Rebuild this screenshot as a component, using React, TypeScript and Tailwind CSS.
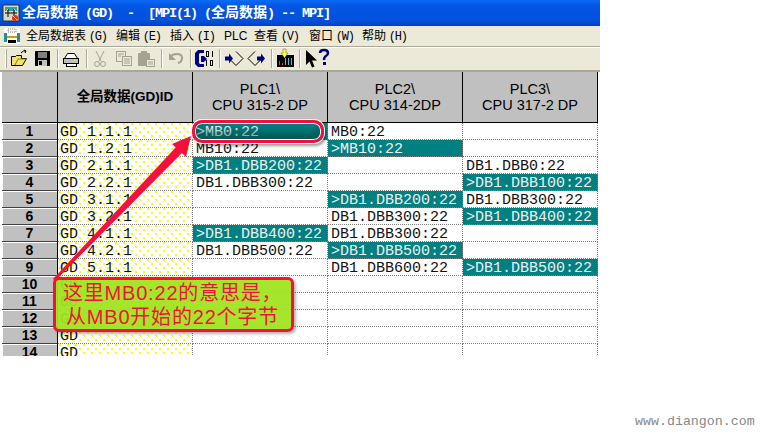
const mono = "font-['Liberation_Mono','Noto_Sans_CJK_SC',monospace]";
const cols = "grid grid-cols-[2px_56px_135px_135px_135px_135px]";

type Cell = { t: string; on?: boolean } | null;
const rows: { id: string; c: Cell[] }[] = [
  { id: "GD 1.1.1", c: [{ t: ">MB0:22", on: true }, { t: "MB0:22" }, null] },
  { id: "GD 1.2.1", c: [{ t: "MB10:22" }, { t: ">MB10:22", on: true }, null] },
  { id: "GD 2.1.1", c: [{ t: ">DB1.DBB200:22", on: true }, null, { t: "DB1.DBB0:22" }] },
  { id: "GD 2.2.1", c: [{ t: "DB1.DBB300:22" }, null, { t: ">DB1.DBB100:22", on: true }] },
  { id: "GD 3.1.1", c: [null, { t: ">DB1.DBB200:22", on: true }, { t: "DB1.DBB300:22" }] },
  { id: "GD 3.2.1", c: [null, { t: "DB1.DBB300:22" }, { t: ">DB1.DBB400:22", on: true }] },
  { id: "GD 4.1.1", c: [{ t: ">DB1.DBB400:22", on: true }, { t: "DB1.DBB300:22" }, null] },
  { id: "GD 4.2.1", c: [{ t: "DB1.DBB500:22" }, { t: ">DB1.DBB500:22", on: true }, null] },
  { id: "GD 5.1.1", c: [null, { t: "DB1.DBB600:22" }, { t: ">DB1.DBB500:22", on: true }] },
  { id: "GD", c: [null, null, null] },
  { id: "GD", c: [null, null, null] },
  { id: "GD", c: [null, null, null] },
  { id: "GD", c: [null, null, null] },
  { id: "GD", c: [null, null, null] },
];

function Sep({ x }: { x: number }) {
  return (
    <>
      <rect x={x} y="2" width="1" height="19" fill="#aca899" />
      <rect x={x + 1} y="2" width="1" height="19" fill="#fff" />
    </>
  );
}

function ToolIcons() {
  return (
    <svg width="340" height="23" viewBox="0 0 340 23" className="block">
      <rect x="5" y="2" width="1" height="19" fill="#fff" />
      <rect x="6" y="2" width="1" height="19" fill="#aca899" />
      {/* open */}
      <path d="M11.5 18.5 V9.5 h4 l1-1 h5 v3 h5 l-4 7z" fill="#f3e26a" stroke="#000" />
      <path d="M15 18 l3-6 h8" stroke="#8a7a20" fill="none" />
      <path d="M21 6 q2-3 5-2 M26 4 l-2-1 M26 4 l-1 2" stroke="#000" fill="none" />
      {/* save */}
      <rect x="35" y="4" width="15" height="15" fill="#000" />
      <rect x="38" y="5" width="9" height="6" fill="#7f7f7f" />
      <rect x="38" y="13" width="9" height="6" fill="#c0c0c0" />
      <rect x="39" y="14" width="3" height="4" fill="#000" />
      <Sep x={57} />
      {/* print */}
      <path d="M67.5 6.5 h7 l3 5 h-13z" fill="#fff" stroke="#000" />
      <rect x="63.5" y="11.5" width="15" height="5" fill="#c0c0c0" stroke="#000" />
      <rect x="66.5" y="16.5" width="10" height="3" fill="#fff" stroke="#000" />
      <rect x="74" y="13" width="2" height="1" fill="#ffe020" />
      <Sep x={86} />
      {/* cut */}
      <g stroke="#a5a294" fill="none">
        <path d="M96 4 l5 10 M104 4 l-5 10" />
        <circle cx="97" cy="17" r="2.5" />
        <circle cx="103" cy="17" r="2.5" />
      </g>
      {/* copy */}
      <g stroke="#a5a294" fill="#ece9d8">
        <rect x="116.5" y="4.5" width="9" height="10" />
        <rect x="122.5" y="9.5" width="9" height="9" />
        <path d="M118 7h6M118 9h3M124 12h6M124 14h6M124 16h6" fill="none" />
      </g>
      {/* paste */}
      <rect x="138" y="6" width="12" height="13" rx="1" fill="#a5a294" />
      <rect x="141" y="4" width="6" height="4" fill="#a5a294" />
      <rect x="146.5" y="12.5" width="8" height="7" fill="#ece9d8" stroke="#a5a294" />
      <path d="M148 15h5M148 17h5" stroke="#a5a294" />
      <Sep x={161} />
      {/* undo */}
      <path d="M171 9 q2-2 6-2 q5 0 5 4 q0 4-4 5" fill="none" stroke="#a5a294" strokeWidth="2" />
      <path d="M169 6 v7 h7z" fill="#a5a294" />
      <Sep x={190} />
      {/* C01 */}
      <path d="M204 3 h-6 l-3 3 v11 l3 3 h6 v-3 h-4 l-1-1 v-9 l1-1 h4z" fill="#000080" />
      <path d="M201 9 h3 l3 3 l-3 3 h-3z" fill="#000080" />
      <g fill="none" stroke="#000">
        <rect x="206.5" y="4.5" width="2" height="5" />
        <path d="M212.5 4 v6 M206.5 13 v6" />
        <rect x="210.5" y="13.5" width="2" height="5" />
      </g>
      <Sep x={219} />
      {/* import */}
      <path d="M225 9.5 h4 v-3 l4 5 l-4 5 v-3 h-4z" fill="#000080" />
      <path d="M236 4.5 l7 7 l-7 7 l-7-7" fill="none" stroke="#000" />
      {/* export */}
      <path d="M255 4.5 l-7 7 l7 7 l7-7" fill="none" stroke="#000" />
      <path d="M257 9.5 h4 v-3 l4 5 l-4 5 v-3 h-4z" fill="#000080" />
      <Sep x={271} />
      {/* monitor */}
      <rect x="277" y="8" width="17" height="12" fill="#000" />
      <path d="M279.5 18 v-4 M282.5 18 v-2" stroke="#ff3030" />
      <path d="M285.5 18 v-7 M288.5 18 v-7 M291.5 18 v-7" stroke="#40c0e0" />
      <path d="M283 2 h3 v4 h2 l-3.5 5 l-3.5-5 h2z" fill="#ffff30" stroke="#806000" strokeWidth="0.5" />
      <Sep x={299} />
      {/* help */}
      <path d="M306 3 v15 l3.5-3.5 l2.5 6 l2.5-1 l-2.5-6 h5z" fill="#000" />
      <path d="M320 6 q0-3 4-3 q4 0 4 3 q0 2-2 3 q-2 1-2 4" fill="none" stroke="#000080" strokeWidth="2.5" />
      <rect x="323" y="15" width="3" height="3" fill="#000080" />
    </svg>
  );
}

export default function App() {
  return (
    <div className="relative w-[760px] h-[434px] bg-white overflow-hidden">
      <div className="w-[600px]">
        {/* title bar */}
        <div className="h-[26px] flex items-center bg-[linear-gradient(#0a6af4_0%,#0355e3_25%,#0352de_75%,#0240c4_100%)] pl-[2px]">
          <svg width="18" height="18" viewBox="0 0 18 18" className="shrink-0">
            <rect x="1" y="1" width="16" height="16" fill="#d8d8c8" stroke="#303030" />
            <rect x="3" y="3" width="12" height="4" fill="#30a0a0" />
            <path d="M3 9 h12 M6 5 v8 M12 5 v8" stroke="#000" />
            <path d="M3 8 l3-3 M15 8 l-3-3" stroke="#f0e020" />
            <circle cx="13" cy="14" r="3" fill="#e03010" />
            <path d="M11 12 l4 4" stroke="#ffe040" />
          </svg>
          <div className="ml-[2px] text-white text-[13.5px] tracking-[-1.1px] font-bold leading-none whitespace-pre font-['Liberation_Mono','Noto_Sans_CJK_SC',monospace]">
            <span className="text-[14px] tracking-normal">全局数据</span> (GD)  -  [MPI(1) (<span className="text-[14px] tracking-normal">全局数据</span>) -- MPI]
          </div>
        </div>
        {/* menu bar */}
        <div className="h-[20px] bg-[#ece9d8] flex items-center pl-[4px] text-black text-[12px] leading-none font-['Noto_Sans_CJK_SC',sans-serif]">
          <svg width="16" height="16" viewBox="0 0 16 16" className="shrink-0">
            <rect x="0" y="0" width="16" height="16" fill="#fff" />
            <rect x="4" y="1" width="8" height="3" fill="none" stroke="#808080" strokeDasharray="1 1" />
            <rect x="0" y="5" width="3" height="9" fill="#2090a0" />
            <rect x="13" y="5" width="3" height="9" fill="#2090a0" />
            <path d="M3 9 h10" stroke="#d0a000" strokeWidth="2" />
            <rect x="4" y="12" width="8" height="3" fill="#000" />
          </svg>
          <span className="ml-[6px] w-[90px] whitespace-pre">全局数据表 <Acc>(G)</Acc></span>
          <span className="w-[54px] whitespace-pre">编辑 <Acc>(E)</Acc></span>
          <span className="w-[54px] whitespace-pre">插入 <Acc>(I)</Acc></span>
          <span className="w-[30px] whitespace-pre font-['Liberation_Sans',sans-serif]">PLC</span>
          <span className="w-[55px] whitespace-pre">查看 <Acc>(V)</Acc></span>
          <span className="w-[53px] whitespace-pre">窗口 <Acc>(W)</Acc></span>
          <span className="whitespace-pre">帮助 <Acc>(H)</Acc></span>
        </div>
        {/* toolbar */}
        <div className="h-[26px] bg-[#ece9d8] border-t border-t-[#aca899] border-b-2 border-b-[#aca899] shadow-[inset_0_1px_0_#fff]">
          <ToolIcons />
        </div>
        {/* table */}
        <div className="h-[284px] overflow-hidden">
          <div className={`${cols} font-['Liberation_Sans',sans-serif]`}>
            <div className="h-[51px] bg-white" />
            <HeaderCell> </HeaderCell>
            <HeaderCell>
              <span className="font-bold text-[13.5px] whitespace-pre font-['Liberation_Sans','Noto_Sans_CJK_SC',sans-serif]">全局数据(GD)ID</span>
            </HeaderCell>
            <HeaderCell><span>PLC1\<br />CPU 315-2 DP</span></HeaderCell>
            <HeaderCell><span>PLC2\<br />CPU 314-2DP</span></HeaderCell>
            <HeaderCell><span>PLC3\<br />CPU 317-2 DP</span></HeaderCell>
            {rows.map((r, i) => (
              <Row key={i} n={i + 1} id={r.id} c={r.c} />
            ))}
          </div>
        </div>
      </div>
      {/* watermark */}
      <div className="absolute left-[635px] top-[415px] text-[13.3px] leading-none text-[#888] font-['Liberation_Mono',monospace]">www.diangon.com</div>

      {/* highlight ring */}
      <div className="absolute left-[192px] top-[120px] w-[132px] h-[23px] rounded-[10px] border-[3px] border-[#f5103c] shadow-[0_0_0_1px_#fff,inset_0_0_0_1px_#fff,inset_0_-8px_8px_rgba(0,40,40,0.45),2px_3px_3px_rgba(0,0,0,0.4)]" />
      {/* arrow */}
      <svg className="absolute left-[50px] top-[130px]" width="150" height="160" viewBox="0 0 150 160">
        <polygon points="3,149 127,16 133,22 5,151" fill="#f5103c" />
        <polygon points="141,6 122,14 136,27" fill="#f5103c" />
      </svg>
      {/* callout */}
      <div className="absolute left-[53px] top-[277px] w-[241px] h-[55px] rounded-[6px] border-[3px] border-[#f5103c] bg-[#a0e420]/95 shadow-[2px_2px_3px_rgba(0,0,0,0.3)] text-[#f5103c] text-[20px] leading-[24px] tracking-[0.8px] font-['Liberation_Sans','Noto_Sans_CJK_SC',sans-serif] whitespace-pre flex flex-col justify-center">
        <div className="pl-[7px]">这里MB0:22的意思是，</div>
        <div className="pl-[10px]">从MB0开始的22个字节</div>
      </div>
    </div>
  );
}

function Acc({ children }: { children: React.ReactNode }) {
  return <span className="text-[12px] tracking-[-1.2px] font-['Liberation_Mono',monospace]">{children}</span>;
}

function HeaderCell({ children }: { children: React.ReactNode }) {
  return (
    <div className="h-[51px] bg-[#c0c0c0] border-r border-b border-black flex items-center justify-center text-center text-[14.5px] leading-[16px] text-black">
      {children}
    </div>
  );
}

function Dots() {
  return (
    <svg className="absolute inset-0 w-full h-full" shapeRendering="crispEdges" aria-hidden="true">
      <defs>
        <pattern id="gd-dots" width="8" height="8" patternUnits="userSpaceOnUse">
          <rect x="1" y="0" width="2" height="2" fill="#ffff00" />
          <rect x="5" y="4" width="2" height="2" fill="#ffff00" />
        </pattern>
      </defs>
      <rect width="100%" height="100%" fill="url(#gd-dots)" />
    </svg>
  );
}

function Row({ n, id, c }: { n: number; id: string; c: Cell[] }) {
  return (
    <>
      <div className="h-[17px] bg-white" />
      <div className="h-[17px] bg-[#c0c0c0] border-b border-b-[#404040] border-r border-r-black shadow-[inset_1px_1px_0_#fff] flex items-center justify-center text-[14px] font-bold leading-none text-black">
        {n}
      </div>
      <div className={`relative h-[17px] border-r border-b border-[#808080] border-dotted bg-white pl-[2px] text-[15px] leading-[19px] whitespace-pre text-[#111] ${mono}`}>
        <Dots />
        <span className="relative">{id}</span>
      </div>
      {c.map((x, j) => (
        <div
          key={j}
          className={`h-[17px] border-r border-b border-[#808080] border-dotted pl-[3px] text-[15px] leading-[19px] whitespace-pre ${mono} ${x?.on ? "bg-[#008080] text-[#f0f0f0]" : "bg-white text-[#111]"}`}
        >
          {x?.t ?? ""}
        </div>
      ))}
    </>
  );
}
